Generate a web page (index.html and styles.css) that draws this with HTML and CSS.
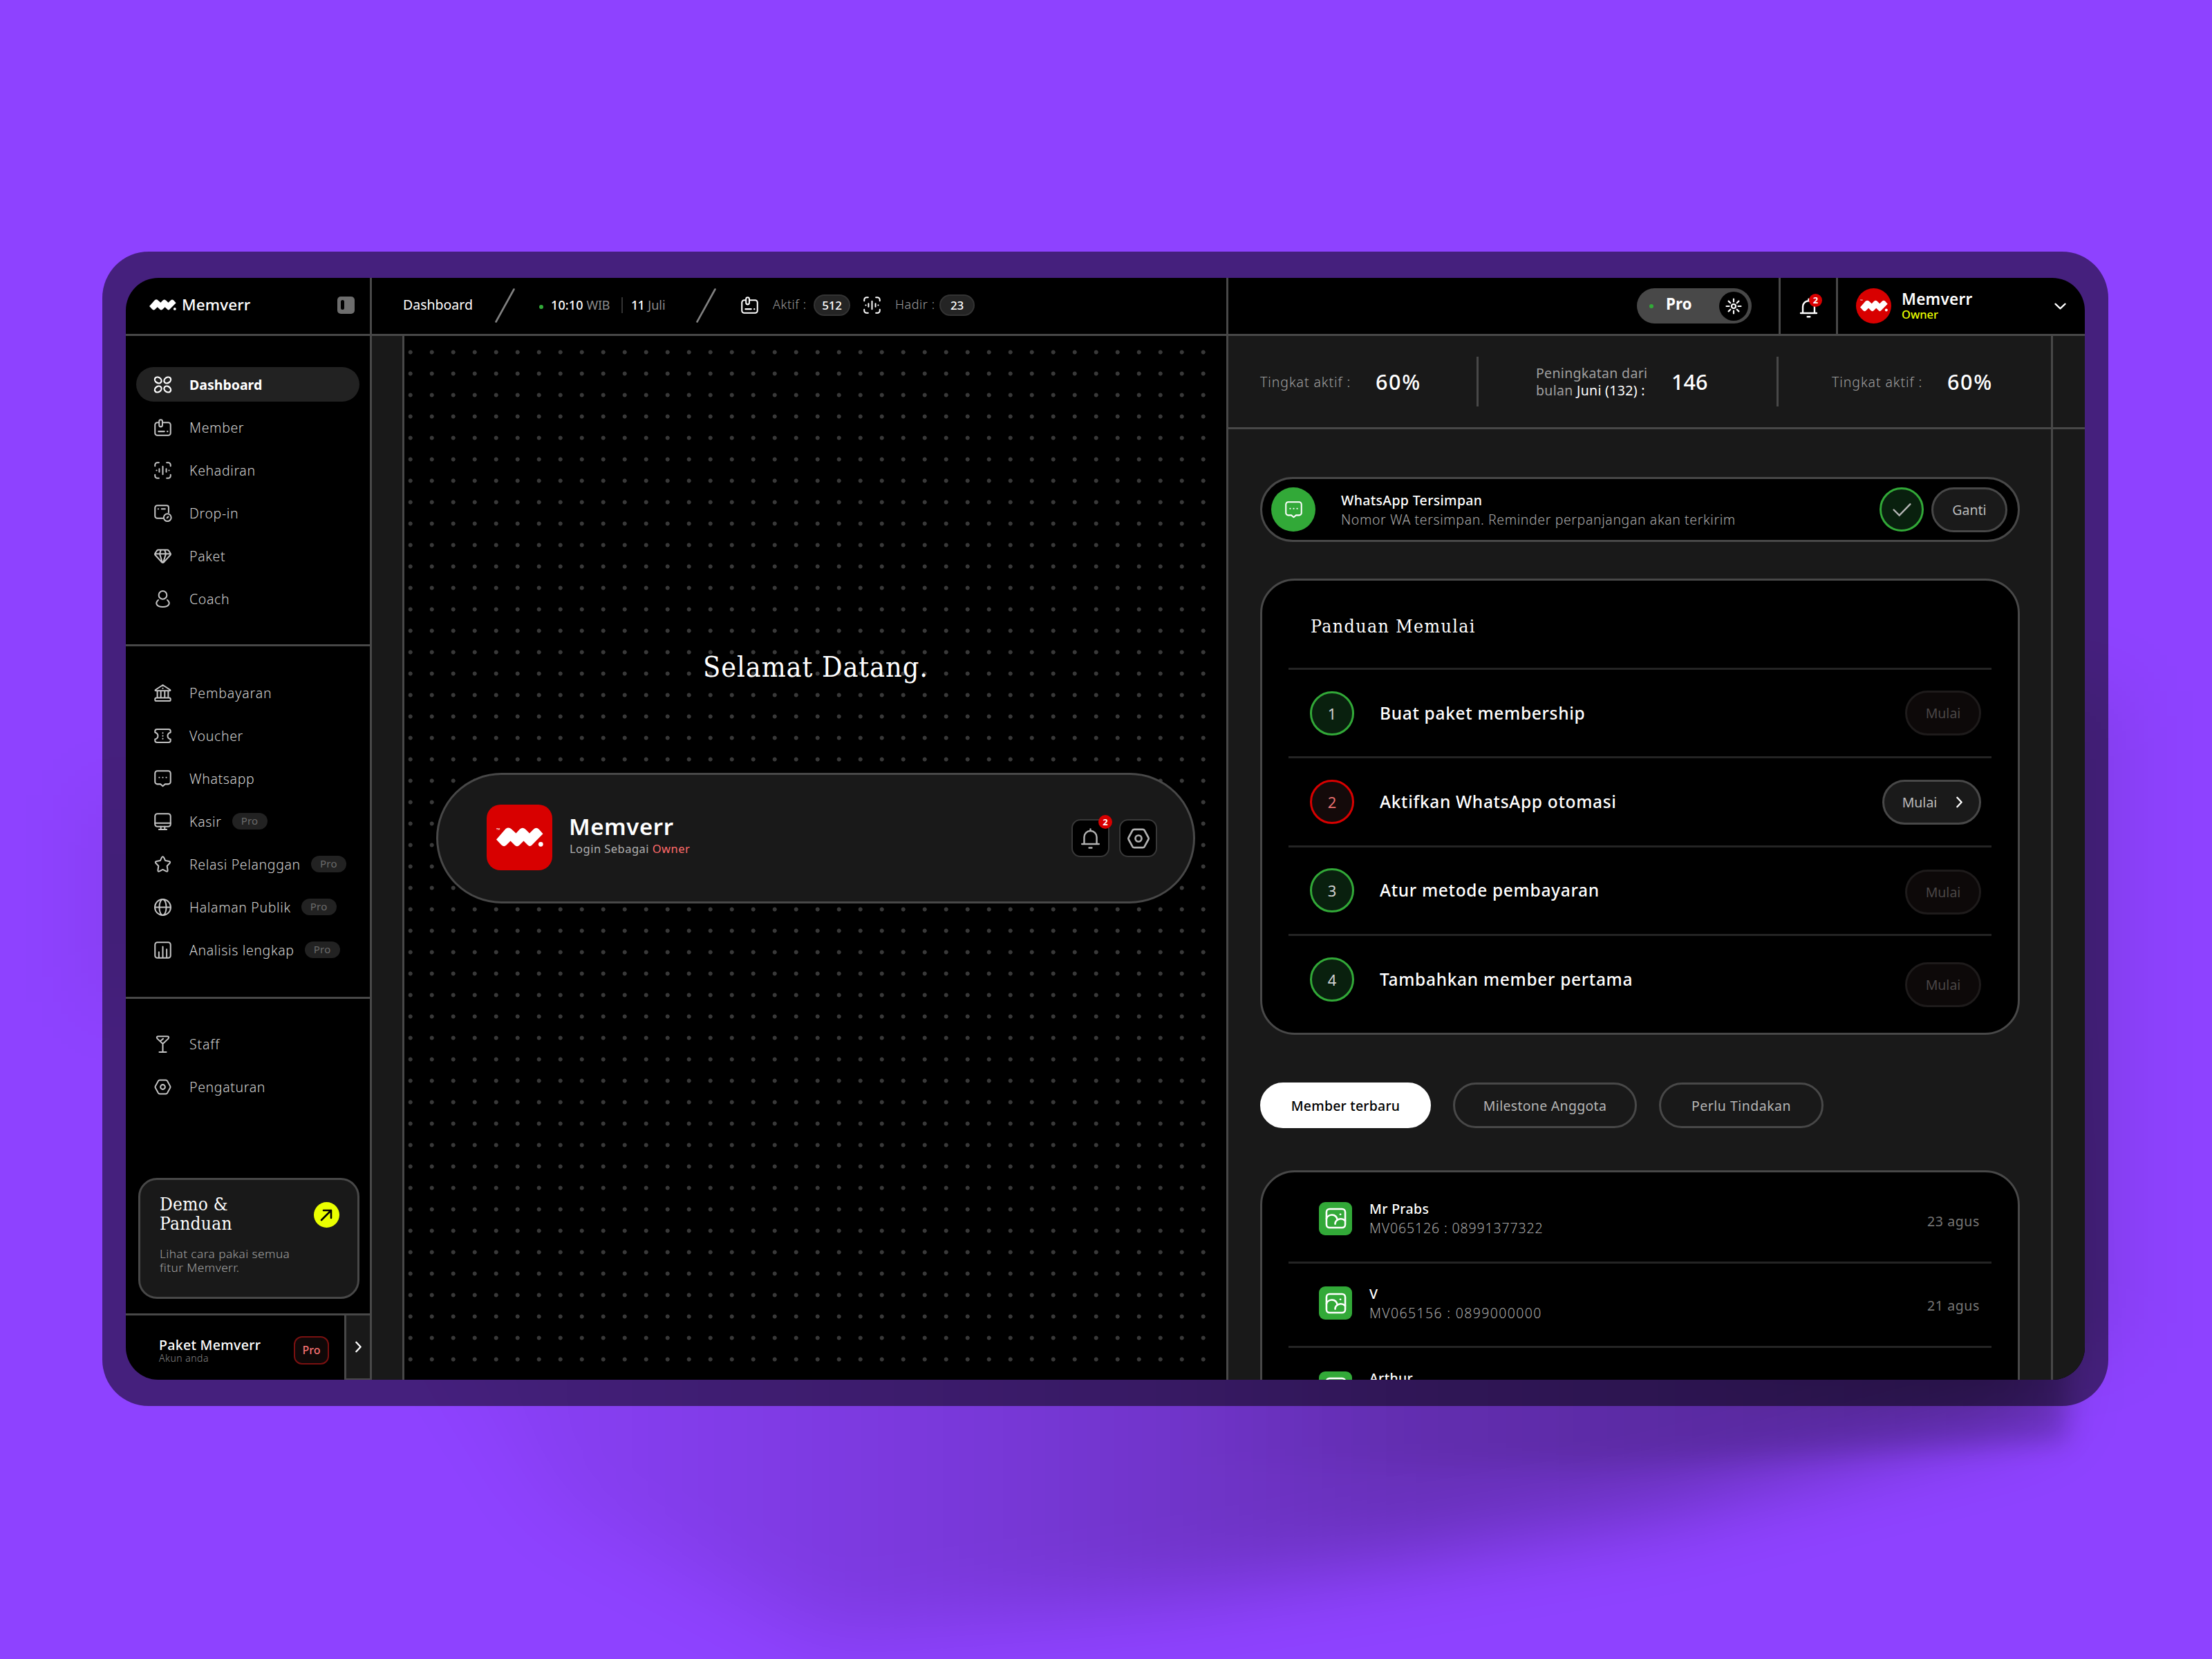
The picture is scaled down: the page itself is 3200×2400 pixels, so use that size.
FILE: index.html
```html
<!DOCTYPE html>
<html lang="id">
<head>
<meta charset="utf-8">
<title>Memverr Dashboard</title>
<link rel="stylesheet" href="styles.css">
</head>
<body>
<svg class="defs" width="0" height="0" aria-hidden="true">
  <symbol id="logo" viewBox="0 0 68 28"><path fill="currentColor" d="M0 17.5 13.5 2Q18 -1 22 2.5L28.500 8.500 34 2.500Q38 -1 42 2.500L48 8.500 54 2.500Q58 -1 62 3L67.500 9.300 51 26Q48.500 28 46 26L39.500 19.500 33 26Q30 28.500 27 26L20.500 19.500 14 26Q11 28.500 7.500 25.500Z"/><circle cx="64.300" cy="24.300" r="3.400" fill="currentColor"/></symbol>
  <symbol id="i-dash" viewBox="0 0 24 24"><ellipse cx="6" cy="6.200" rx="4.600" ry="3.600" transform="rotate(35 6 6.200)"/><ellipse cx="18" cy="6.200" rx="4.600" ry="3.600" transform="rotate(-35 18 6.200)"/><ellipse cx="6" cy="17.800" rx="4.600" ry="3.600" transform="rotate(-35 6 17.800)"/><ellipse cx="18" cy="17.800" rx="4.600" ry="3.600" transform="rotate(35 18 17.800)"/></symbol>
  <symbol id="i-card" viewBox="0 0 24 24"><path d="M7 5.500H5a3 3 0 0 0-3 3V19a3 3 0 0 0 3 3h14a3 3 0 0 0 3-3V8.500a3 3 0 0 0-3-3h-7.500"/><rect x="7.300" y="2" width="4.200" height="9" rx="2.100"/><path d="M6.500 17H14M17.800 17h.4"/></symbol>
  <symbol id="i-scan" viewBox="0 0 24 24"><path d="M7 2H5a3 3 0 0 0-3 3v1.500M17 2h2a3 3 0 0 1 3 3v1.500M7 22H5a3 3 0 0 1-3-3v-1.500M17 22h2a3 3 0 0 0 3-3v-1.500M12 7v10M7.500 10v4M16.500 10v4M3.900 12h.2M19.900 12h.2"/></symbol>
  <symbol id="i-drop" viewBox="0 0 24 24"><path d="M12 18.500H5a3 3 0 0 1-3-3V5a3 3 0 0 1 3-3h12a2.500 2.500 0 0 1 2.500 2.500V11M6 6.500h.300M10.500 6.500H15"/><circle cx="18" cy="17.500" r="4.800"/><path d="m17.500 18 1.500-1.500"/></symbol>
  <symbol id="i-gem" viewBox="0 0 24 24"><path d="M6.200 4h11.600q1 0 1.600.8L22 8.700q.5.800 0 1.500L13.700 19.500q-1.700 1.700-3.400 0L2 10.200q-.5-.7 0-1.500L4.600 4.800Q5.200 4 6.200 4ZM2 9.200h20M9.500 4.200 8 9.200l3.500 11M14.500 4.200 16 9.200l-3.500 11"/></symbol>
  <symbol id="i-coach" viewBox="0 0 24 24"><circle cx="12" cy="7" r="5.200"/><path d="M6.200 13.300C1.800 17 3.500 22.300 12 22.300s10.200-5.300 5.800-9"/></symbol>
  <symbol id="i-bank" viewBox="0 0 24 24"><path d="M2.500 8 12 1.800 21.500 8q.8 1.200-.8 1.200H3.300Q1.700 9.200 2.500 8ZM5 9.500v8M9.500 9.500v8M14.500 9.500v8M19 9.500v8M4 18.200h16q2 0 2 2t-1 2H3q-1 0-1-2t2-2ZM11.900 6h.2"/></symbol>
  <symbol id="i-ticket" viewBox="0 0 24 24"><path d="M4.500 3.500h15A2.500 2.500 0 0 1 22 6v1.500c-5 1.500-5 7.500 0 9V18a2.500 2.500 0 0 1-2.500 2.500h-15A2.500 2.500 0 0 1 2 18v-1.500c5-1.500 5-7.500 0-9V6a2.500 2.500 0 0 1 2.500-2.500ZM12 8.300v.2M12 12v.2M12 15.600v.2"/></symbol>
  <symbol id="i-chat" viewBox="0 0 24 24"><path d="M5 2h14a3 3 0 0 1 3 3v11a3 3 0 0 1-3 3h-4l-3 2.500L9 19H5a3 3 0 0 1-3-3V5a3 3 0 0 1 3-3ZM7.400 10.500h.2M11.900 10.500h.2M16.400 10.500h.2"/></symbol>
  <symbol id="i-screen" viewBox="0 0 24 24"><rect x="2" y="2" width="20" height="16.500" rx="3"/><path d="M2 14h20M9.500 18.500V22M14.500 18.500V22M7 22.200h10"/></symbol>
  <symbol id="i-star" viewBox="0 0 24 24"><path d="M10.700 3q1.300-2 2.600 0l2 4.200 4.800.8q2.300.6.800 2.500L17.500 14l.8 5.500q0 2.300-2.100 1.300L12 18.600l-4.200 2.200q-2.100 1-2.100-1.300L6.500 14 3.100 10.500Q1.600 8.600 3.900 8l4.800-.8Z"/></symbol>
  <symbol id="i-globe" viewBox="0 0 24 24"><circle cx="12" cy="12" r="10.200"/><ellipse cx="12" cy="12" rx="4.500" ry="10.200"/><path d="M2 12h20"/></symbol>
  <symbol id="i-chart" viewBox="0 0 24 24"><rect x="2" y="2" width="20" height="20" rx="3"/><path d="M7 14.500V21M12 7.500V21M17 11V21"/></symbol>
  <symbol id="i-staff" viewBox="0 0 24 24"><path d="M6.500 2h11q3.500 0 1.500 3L12 11.500 5 5Q3 2 6.500 2ZM12 11.500V22M7.500 22.200h9M9.500 7.500 12.500 5"/></symbol>
  <symbol id="i-hex" viewBox="0 0 24 24"><path d="M8 3.200h8q1.200 0 1.800 1L21.500 11q.6 1 0 2L17.800 19.800q-.6 1-1.800 1H8q-1.200 0-1.800-1L2.500 13q-.6-1 0-2L6.200 4.200q.6-1 1.800-1Z"/><circle cx="12" cy="12" r="3"/></symbol>
  <symbol id="i-bell" viewBox="0 0 24 24"><path d="M5 18V10.500a7 7 0 0 1 14 0V18M2.500 18.200h19M10.500 22.500h3M12 3.500V1.500"/></symbol>
  <symbol id="i-image" viewBox="0 0 24 24"><rect x="1.500" y="1.500" width="21" height="21" rx="3.500"/><path d="M1.500 12.500C3 7 12.500 6 13.800 14M11.200 18.300C11.500 12.500 18.500 11 22.500 14.700M17 7.600h.2"/></symbol>
  <symbol id="i-right" viewBox="0 0 10 18"><path d="m1.500 1.500 7 7.500-7 7.500"/></symbol>
</svg>

<div class="stage">
  <svg class="shade" viewBox="0 0 3200 2400" aria-hidden="true">
    <defs>
      <linearGradient id="g1" gradientUnits="userSpaceOnUse" x1="500" y1="0" x2="2950" y2="0"><stop offset="0" stop-opacity="0"/><stop offset=".37" stop-opacity=".15"/><stop offset=".62" stop-opacity=".27"/><stop offset="1" stop-opacity=".28"/></linearGradient>
      <linearGradient id="g2" gradientUnits="userSpaceOnUse" x1="1700" y1="0" x2="2950" y2="0"><stop offset="0" stop-opacity="0"/><stop offset="1" stop-opacity=".2"/></linearGradient>
      <filter id="b1" x="-20%" y="-30%" width="140%" height="160%"><feGaussianBlur stdDeviation="55"/></filter>
      <filter id="b2" x="-20%" y="-30%" width="140%" height="160%"><feGaussianBlur stdDeviation="18"/></filter>
    </defs>
    <path filter="url(#b1)" fill="url(#g1)" d="M300 1500 2900 1300 2960 2040 2400 2190 1700 2310 1200 2370 800 2180Z"/>
    <path filter="url(#b2)" fill="url(#g2)" d="M1700 1700 2990 1500V2085L2300 2120 1700 2120Z"/>
    <path filter="url(#b1)" fill-opacity=".09" d="M2500 1000H3070V1950H2500ZM140 1150H200V1450H140Z"/>
  </svg>

  <div class="frame">
  <div class="app">
    <aside class="side">
      <div class="brand">
        <svg class="brand-logo"><use href="#logo"/></svg>
        <b class="brand-name">Memverr</b>
        <i class="toggle"></i>
      </div>
      <nav class="nav nav-a">
        <a class="item on"><svg class="ic"><use href="#i-dash"/></svg><span>Dashboard</span></a>
        <a class="item"><svg class="ic"><use href="#i-card"/></svg><span>Member</span></a>
        <a class="item"><svg class="ic"><use href="#i-scan"/></svg><span>Kehadiran</span></a>
        <a class="item"><svg class="ic"><use href="#i-drop"/></svg><span>Drop-in</span></a>
        <a class="item"><svg class="ic"><use href="#i-gem"/></svg><span>Paket</span></a>
        <a class="item"><svg class="ic"><use href="#i-coach"/></svg><span>Coach</span></a>
      </nav>
      <nav class="nav nav-b">
        <a class="item wide"><svg class="ic"><use href="#i-bank"/></svg><span>Pembayaran</span></a>
        <a class="item"><svg class="ic"><use href="#i-ticket"/></svg><span>Voucher</span></a>
        <a class="item"><svg class="ic"><use href="#i-chat"/></svg><span>Whatsapp</span></a>
        <a class="item"><svg class="ic"><use href="#i-screen"/></svg><span>Kasir</span><em class="pro">Pro</em></a>
        <a class="item"><svg class="ic"><use href="#i-star"/></svg><span>Relasi Pelanggan</span><em class="pro">Pro</em></a>
        <a class="item"><svg class="ic"><use href="#i-globe"/></svg><span>Halaman Publik</span><em class="pro">Pro</em></a>
        <a class="item"><svg class="ic"><use href="#i-chart"/></svg><span>Analisis lengkap</span><em class="pro">Pro</em></a>
      </nav>
      <nav class="nav nav-c">
        <a class="item wide"><svg class="ic"><use href="#i-staff"/></svg><span>Staff</span></a>
        <a class="item"><svg class="ic"><use href="#i-hex"/></svg><span>Pengaturan</span></a>
      </nav>
      <div class="demo">
        <div>
          <h3>Demo &amp;<br>Panduan</h3>
          <p>Lihat cara pakai semua<br>fitur Memverr.</p>
        </div>
        <svg class="go" viewBox="0 0 37 37"><circle cx="18.500" cy="18.500" r="18.500" fill="#eaff00"/><path d="M11 26 25 12M14 12H25V23" fill="none" stroke="#000" stroke-width="2.600" stroke-linecap="round" stroke-linejoin="round"/></svg>
      </div>
      <div class="plan">
        <div class="plan-main">
          <div class="plan-text"><b>Paket Memverr</b><small>Akun anda</small></div>
          <span class="plan-pro">Pro</span>
        </div>
        <div class="plan-next"><svg class="chev"><use href="#i-right"/></svg></div>
      </div>
    </aside>

    <div class="body">
      <header class="top">
        <div class="top-left">
          <span class="crumb">Dashboard</span>
          <svg class="slash" viewBox="0 0 29 50"><path d="M1.500 48.500 27.500 1.500"/></svg>
          <i class="live"></i>
          <span class="clock"><b>10:10</b><span>WIB</span></span>
          <span class="day"><b>11</b><span>Juli</span></span>
          <svg class="slash" viewBox="0 0 29 50"><path d="M1.500 48.500 27.500 1.500"/></svg>
          <svg class="ic w"><use href="#i-card"/></svg>
          <span class="lbl l1">Aktif :</span><span class="num n1">512</span>
          <svg class="ic w"><use href="#i-scan"/></svg>
          <span class="lbl l2">Hadir :</span><span class="num n2">23</span>
        </div>
        <div class="top-right">
          <div class="mode"><i class="live"></i><b>Pro</b><span class="sun"><svg viewBox="0 0 24 24"><circle cx="12" cy="12" r="3"/><path d="M12 1.500v4M12 18.500v4M1.500 12h4M18.500 12h4M4.600 4.600l2.700 2.700M16.700 16.700l2.700 2.700M4.600 19.400l2.700-2.700M16.700 7.300l2.700-2.700"/></svg></span></div>
          <div class="bell"><svg class="bi"><use href="#i-bell"/></svg><em class="badge">2</em></div>
          <div class="me">
            <span class="ava"><small>™</small><svg><use href="#logo"/></svg></span>
            <div class="me-text"><b>Memverr</b><small>Owner</small></div>
            <svg class="down" viewBox="0 0 18 10"><path d="m1.500 1.500 7.500 7 7.500-7"/></svg>
          </div>
        </div>
      </header>

      <div class="work">
        <div class="gutter"></div>
        <section class="canvas">
          <h1>Selamat Datang.</h1>
          <div class="user">
            <span class="user-ava"><small>™</small><svg><use href="#logo"/></svg></span>
            <div class="user-text"><b>Memverr</b><small>Login Sebagai <em>Owner</em></small></div>
            <span class="sq"><svg class="qi"><use href="#i-bell"/></svg><em class="badge">2</em></span>
            <span class="sq"><svg class="qh"><use href="#i-hex"/></svg></span>
          </div>
        </section>

        <section class="panel">
          <div class="stats">
            <div class="stat s1"><span>Tingkat aktif :</span><b>60%</b></div>
            <div class="stat s2"><p>Peningkatan dari<br>bulan <u>Juni (132) :</u></p><b>146</b></div>
            <div class="stat s3"><span>Tingkat aktif :</span><b>60%</b></div>
            <div class="edge"></div>
          </div>
          <div class="below">
            <div class="feed">
              <div class="wa">
                <span class="wa-ic"><svg><use href="#i-chat"/></svg></span>
                <div class="wa-text"><b>WhatsApp Tersimpan</b><span>Nomor WA tersimpan. Reminder perpanjangan akan terkirim</span></div>
                <span class="ok"><svg viewBox="0 0 28 20"><path d="m1.500 10 8.500 8.500L26.500 1.500"/></svg></span>
                <span class="btn">Ganti</span>
              </div>

              <div class="guide">
                <h2>Panduan Memulai</h2>
                <div class="step"><i>1</i><b>Buat paket membership</b><span class="btn off">Mulai</span></div>
                <div class="step"><i class="red">2</i><b>Aktifkan WhatsApp otomasi</b><span class="btn go-btn"><span>Mulai</span><svg class="chev"><use href="#i-right"/></svg></span></div>
                <div class="step"><i>3</i><b>Atur metode pembayaran</b><span class="btn off low">Mulai</span></div>
                <div class="step"><i>4</i><b>Tambahkan member pertama</b><span class="btn off lower">Mulai</span></div>
              </div>

              <div class="tabs">
                <span class="tab on">Member terbaru</span>
                <span class="tab t2">Milestone Anggota</span>
                <span class="tab t3">Perlu Tindakan</span>
              </div>

              <div class="list">
                <div class="row"><span class="pic"><svg><use href="#i-image"/></svg></span><div><b>Mr Prabs</b><span class="tight">MV065126 : 08991377322</span></div><time>23 agus</time></div>
                <div class="row"><span class="pic"><svg><use href="#i-image"/></svg></span><div><b>V</b><span>MV065156 : 0899000000</span></div><time>21 agus</time></div>
                <div class="row last"><span class="pic"><svg><use href="#i-image"/></svg></span><div><b>Arthur</b></div></div>
              </div>
            </div>
            <div class="edge"></div>
          </div>
        </section>
      </div>
    </div>
  </div>
  </div>
</div>
</body>
</html>
```
FILE: styles.css
```css
* { box-sizing: border-box; }
body { margin: 0; font-family: "Noto Sans", "Open Sans", sans-serif; font-size: 19.5px; line-height: 24px; letter-spacing: .016em; color: #fff; }
h1, h2, h3, p { margin: 0; font-weight: 400; }
b { font-weight: 500; }
em, i { font-style: normal; }
u { text-decoration: none; }
svg { fill: none; flex: none; overflow: visible; }
.defs { position: absolute; }

.stage { position: relative; width: 3200px; height: 2400px; padding: 364px 150px 0 148px; background: #8e42ff; overflow: hidden; }
.shade { position: absolute; left: 0; top: 0; width: 3200px; height: 2400px; fill: #000; }
.frame { position: relative; width: 2902px; height: 1670px; padding: 38px 34px; border-radius: 67px; background: rgba(0, 0, 0, .51); }
.app { display: flex; width: 2834px; height: 1594px; border-radius: 47px; overflow: hidden; background: #000; }

/* icons */
.ic { width: 27px; height: 27px; stroke: #c4c4c4; stroke-width: 1.8; stroke-linecap: round; stroke-linejoin: round; }
.ic.w { stroke: #fff; }
.chev { width: 9px; height: 17px; stroke: #fff; stroke-width: 2.6; stroke-linecap: round; stroke-linejoin: round; }
.live { width: 6px; height: 6px; border-radius: 50%; background: #32a938; flex: none; }
.badge { position: absolute; display: flex; align-items: center; justify-content: center; width: 19px; height: 19px; border-radius: 50%; background: #d80000; font-size: 13px; font-weight: 700; line-height: 19px; letter-spacing: 0; color: #fff; }

/* sidebar */
.side { display: flex; flex-direction: column; width: 356px; border-right: 3px solid #484848; }
.brand { display: flex; align-items: center; height: 84px; padding: 0 22px 3px 34px; border-bottom: 3px solid #484848; }
.brand-logo { width: 39px; height: 16px; }
.brand-name { margin-left: 8px; font-size: 22.5px; letter-spacing: .005em; }
.toggle { width: 25px; height: 25px; margin-left: auto; border-radius: 5px; background: #6e6e6e; }
.toggle::before { content: ""; display: block; width: 5px; height: 14px; margin: 5px; border-radius: 3px; background: #000; }
.nav { display: flex; flex-direction: column; gap: 12px; padding: 0 15px; flex: none; }
.nav-a { height: 449px; padding-top: 45px; border-bottom: 3px solid #484848; }
.nav-b { height: 510px; padding-top: 42px; border-bottom: 3px solid #484848; }
.nav-c { padding-top: 40px; }
.item { display: flex; align-items: center; height: 50px; padding-left: 25px; border-radius: 25px; color: #d2d2d2; font-weight: 300; letter-spacing: .033em; }
.item .ic { margin-right: 25px; }
.item > span { margin-top: 1px; }
.item.wide { letter-spacing: .045em; }
.item.on { background: #222; color: #fff; font-weight: 700; letter-spacing: 0; }
.item.on .ic { stroke: #fff; stroke-width: 2; }
.pro { width: 51px; height: 24px; margin-left: 15px; border-radius: 12px; background: #222; color: #6a6a6a; font-size: 15px; line-height: 23px; letter-spacing: .016em; text-align: center; font-weight: 400; }
.demo { display: flex; justify-content: space-between; width: 320px; height: 175px; margin: auto 15px 21px 18px; padding: 21px 26px 0 28px; border: 3px solid #484848; border-radius: 27px; background: #191919; }
h3 { font-family: "DejaVu Serif Condensed", "DejaVu Serif", serif; font-stretch: condensed; font-size: 26px; line-height: 28px; letter-spacing: .012em; }
.demo p { margin-top: 20px; font-size: 17.3px; line-height: 20px; letter-spacing: .024em; font-weight: 300; color: #a2a2a2; }
.go { width: 37px; height: 37px; margin-top: 11px; }
.plan { display: flex; flex: none; height: 96px; border-top: 3px solid #484848; }
.plan-main { display: flex; flex: 1; justify-content: space-between; padding: 30px 22px 0 48px; }
.plan-text b, .plan-text small { display: block; }
.plan-text b { margin-top: 1px; }
.plan-text small { font-size: 14px; line-height: 14px; font-weight: 300; letter-spacing: .035em; color: #888; }
.plan-pro { width: 51px; height: 41px; border: 2px solid #7a1010; border-radius: 12px; background: #0f0808; color: #f67171; font-size: 16px; line-height: 36px; letter-spacing: 0; text-align: center; font-weight: 500; }
.plan-next { display: flex; align-items: center; justify-content: center; width: 37px; border-left: 3px solid #484848; border-bottom: 2px solid #484848; background: #191919; }

/* header */
.body { flex: 1; min-width: 0; display: flex; flex-direction: column; }
.top { display: flex; height: 84px; flex: none; border-bottom: 3px solid #484848; }
.top-left { display: flex; align-items: center; width: 1236px; padding: 0 0 2px 45px; }
.crumb { width: 133px; margin-top: -1px; letter-spacing: 0; }
.slash { width: 29px; height: 50px; stroke: #808080; stroke-width: 2.6; stroke-linecap: round; }
.top-left .live { margin: 4px 11px 0 35px; }
.clock, .day { display: flex; font-size: 18px; letter-spacing: .005em; color: #8a8a8a; }
.clock > *, .day > * { margin-top: -1px; }
.clock { width: 104px; gap: 5px; border-right: 2px solid #333; margin-right: 12px; }
.clock b, .day b { color: #fff; }
.clock span { letter-spacing: -.02em; }
.day { width: 94px; gap: 5px; }
.day b { letter-spacing: -.04em; }
.top-left .ic { margin-left: 35px; }
.lbl { font-size: 18px; font-weight: 300; letter-spacing: .03em; color: #9c9c9c; margin-left: 20px; margin-top: -3px; white-space: nowrap; }
.l1 { width: 59px; }
.num + .ic { margin-left: 18px !important; }
.l2 { width: 64px; }
.num { display: flex; align-items: center; justify-content: center; height: 31px; border: 2px solid #333; border-radius: 16px; background: #242424; font-size: 17px; letter-spacing: -.01em; font-weight: 500; }
.n1 { width: 53px; }
.n2 { width: 51px; }
.top-right { display: flex; align-items: center; flex: 1; border-left: 3px solid #484848; }
.mode { display: flex; align-items: center; width: 166px; height: 51px; margin-left: 591px; padding: 0 5px 0 18px; border-radius: 26px; background: #484848; font-size: 22.5px; letter-spacing: 0; }
.mode b { margin: -5px 0 0 18px; font-weight: 700; }
.sun { display: flex; align-items: center; justify-content: center; width: 42px; height: 42px; margin-left: auto; border-radius: 50%; background: #000; }
.sun svg { width: 24px; height: 24px; stroke: #fff; stroke-width: 2.2; stroke-linecap: round; }
.bell { position: relative; display: flex; align-items: center; justify-content: center; width: 86px; height: 81px; margin-left: 39px; border: 3px solid #484848; border-width: 0 3px; }
.bi { width: 29px; height: 31px; stroke: #fff; stroke-width: 2; stroke-linecap: round; stroke-linejoin: round; margin-top: 6px; }
.bell .badge { left: 41px; top: 23px; }
.me { display: flex; align-items: center; flex: 1; padding: 0 27px 0 26px; }
.ava { position: relative; display: flex; align-items: center; justify-content: center; width: 51px; height: 51px; border-radius: 50%; background: #d80000; }
.ava svg { width: 40px; height: 17px; }
.ava small, .user-ava small { position: absolute; left: 6px; top: 16px; font-size: 5px; line-height: 5px; letter-spacing: 0; }
.me-text { margin-left: 15px; }
.me-text b, .me-text small { display: block; }
.me-text b { margin-top: 1px; font-size: 22.5px; line-height: 22px; letter-spacing: .012em; font-weight: 600; }
.me-text small { font-size: 16.5px; line-height: 21px; font-weight: 500; letter-spacing: 0; color: #eaff00; }
.down { width: 17px; height: 10px; margin-left: auto; stroke: #fff; stroke-width: 2.4; stroke-linecap: round; stroke-linejoin: round; }

/* work area */
.work { display: flex; flex: 1; min-height: 0; }
.gutter { width: 47px; border-right: 3px solid #484848; background: #191919; }
.canvas { position: relative; width: 1189px; padding: 455px 0 0 46px; }
.canvas::before { content: ""; position: absolute; left: 0; top: 8px; width: 1178px; height: 1488px; background: radial-gradient(circle at 8.7px 15.5px, #393939 2.6px, transparent 3.4px) 0 0 / 31px 31px; }
h1 { position: relative; width: 1098px; height: 177px; text-align: center; font-family: "DejaVu Serif Condensed", "DejaVu Serif", serif; font-stretch: condensed; font-size: 41px; line-height: 48px; letter-spacing: .023em; }
.user { position: relative; display: flex; align-items: center; width: 1098px; height: 189px; padding: 0 52px 0 70px; border: 3px solid #484848; border-radius: 95px; background: #191919; }
.user-ava { position: relative; display: flex; align-items: center; justify-content: center; width: 95px; height: 95px; margin-top: -3px; border-radius: 20px; background: #d80000; }
.user-ava svg { width: 68px; height: 28px; }
.user-ava small { left: 14px; top: 34px; font-size: 7px; }
.user-text { margin: -8px auto 0 24px; }
.user-text b, .user-text small { display: block; }
.user-text b { font-size: 33px; line-height: 38px; letter-spacing: .017em; font-weight: 600; }
.user-text small { margin: 1px 0 0 1px; font-size: 16.5px; line-height: 24px; letter-spacing: .028em; color: #b0b0b0; }
.user-text em { color: #ff6b6b; }
.sq { position: relative; display: flex; align-items: center; justify-content: center; width: 55px; height: 55px; margin-left: 14px; border: 2px solid #383838; border-radius: 13px; background: #000; }
.qi { width: 31px; height: 32px; stroke: #b0b0b0; stroke-width: 1.9; stroke-linecap: round; stroke-linejoin: round; }
.qh { width: 36px; height: 36px; stroke: #b0b0b0; stroke-width: 1.8; }
.sq .badge { left: 37px; top: -8px; width: 20px; height: 20px; }

/* right panel */
.panel { display: flex; flex-direction: column; flex: 1; min-width: 0; border-left: 3px solid #484848; background: #191919; }
.edge { width: 49px; border-left: 3px solid #484848; }
.stats { display: flex; flex: none; height: 135px; border-bottom: 3px solid #484848; color: #a0a0a0; font-weight: 300; }
.stat { display: flex; align-items: center; height: 132px; padding-top: 1px; }
.stat > span { width: 133px; white-space: nowrap; letter-spacing: .048em; }
.stat b { color: #fff; font-size: 30.5px; letter-spacing: .055em; margin-top: -1px; }
.stat u { color: #fff; font-weight: 400; }
.stat p { width: 163px; white-space: nowrap; line-height: 24.5px; }
.s1 { width: 362px; padding-left: 46px; }
.s1 b, .s3 b { margin-left: 34px; }
.s2 { width: 434px; padding-left: 83px; }
.s2 b { margin-left: 33px; letter-spacing: 0; }
.s3 { width: 394px; padding-left: 77px; }
.s1, .s2 { background: linear-gradient(#484848, #484848) right 30px / 3px 72px no-repeat; }
.below { display: flex; flex: 1; min-height: 0; }
.feed { width: 1190px; padding: 69px 45px 0 46px; }
.btn { display: flex; align-items: center; justify-content: center; width: 110px; height: 65px; padding-top: 1px; border: 3px solid #484848; border-radius: 33px; background: #1a1a1a; color: #bbb; letter-spacing: 0; }
.wa { display: flex; align-items: center; height: 94px; padding: 0 15px 0 13px; border: 3px solid #484848; border-radius: 47px; background: #000; }
.wa-ic { display: flex; align-items: center; justify-content: center; width: 64px; height: 64px; border-radius: 50%; background: #32a938; }
.wa-ic svg { width: 27px; height: 27px; stroke: #fff; stroke-width: 1.8; stroke-linecap: round; stroke-linejoin: round; }
.wa-text { margin: 1px auto 0 37px; }
.wa-text b, .wa-text span { display: block; line-height: 28px; }
.wa-text b { letter-spacing: .017em; }
.wa-text span { font-weight: 300; letter-spacing: .031em; color: #aaa; }
.ok { display: flex; align-items: center; justify-content: center; width: 64px; height: 64px; margin-right: 11px; border: 3px solid #32a938; border-radius: 50%; background: #09200e; }
.ok svg { width: 27px; height: 19px; stroke: #b5b5b5; stroke-width: 2.6; stroke-linecap: round; }
.guide { height: 660px; margin-top: 53px; padding: 0 38px; border: 3px solid #484848; border-radius: 50px; background: #000; }
h2 { height: 126px; padding: 50px 0 0 32px; font-family: "DejaVu Serif Condensed", "DejaVu Serif", serif; font-stretch: condensed; font-size: 26.5px; line-height: 32px; letter-spacing: .052em; }
.step { display: flex; align-items: center; height: 128.4px; padding: 0 15px 0 31px; border-top: 3px solid #242424; }
.step i { display: flex; align-items: center; justify-content: center; width: 64px; height: 64px; border: 3px solid #32a938; border-radius: 50%; background: #09200e; color: #d0d0d0; font-size: 22px; letter-spacing: 0; }
.step i.red { border-color: #d80000; background: #140a0a; color: #e87070; }
.step b { margin: 0 auto 0 37px; font-size: 24.5px; letter-spacing: .028em; }
.off { border-color: #1e1b1b; background: #0d0909; color: #4a4646; }
.low { position: relative; top: 2px; }
.lower { position: relative; top: 8px; }
.go-btn { width: 143px; gap: 28px; padding-left: 2px; }
.tabs { display: flex; margin-top: 69px; }
.tab { display: flex; align-items: center; justify-content: center; height: 66px; padding-top: 1px; border: 3px solid #484848; border-radius: 33px; color: #b5b5b5; width: 247px; margin-right: 32px; letter-spacing: .015em; }
.tab.on { border-color: #fff; background: #fff; color: #000; font-weight: 500; letter-spacing: .01em; }
.tab.t2 { width: 266px; }
.tab.t3 { width: 238px; letter-spacing: .025em; }
.list { height: 400px; margin-top: 61px; padding: 9px 38px 0; border: 3px solid #484848; border-radius: 50px; background: #000; }
.row { display: flex; align-items: center; height: 122.5px; padding: 0 17px 4px 44px; border-bottom: 3px solid #242424; }
.pic { display: flex; align-items: center; justify-content: center; width: 48px; height: 48px; margin-right: 25px; border-radius: 9px; background: #32a938; }
.pic svg { width: 31px; height: 31px; stroke: #fff; stroke-width: 2; stroke-linecap: round; }
.row div { padding-top: 1px; }
.row b, .row div span { display: block; line-height: 28px; }
.row div span { font-weight: 300; letter-spacing: .069em; color: #a8a8a8; }
.row div .tight { letter-spacing: .044em; }
.row.last b { margin-bottom: 28px; }
.row time { margin: 8px 0 0 auto; letter-spacing: .032em; color: #777; }
```
